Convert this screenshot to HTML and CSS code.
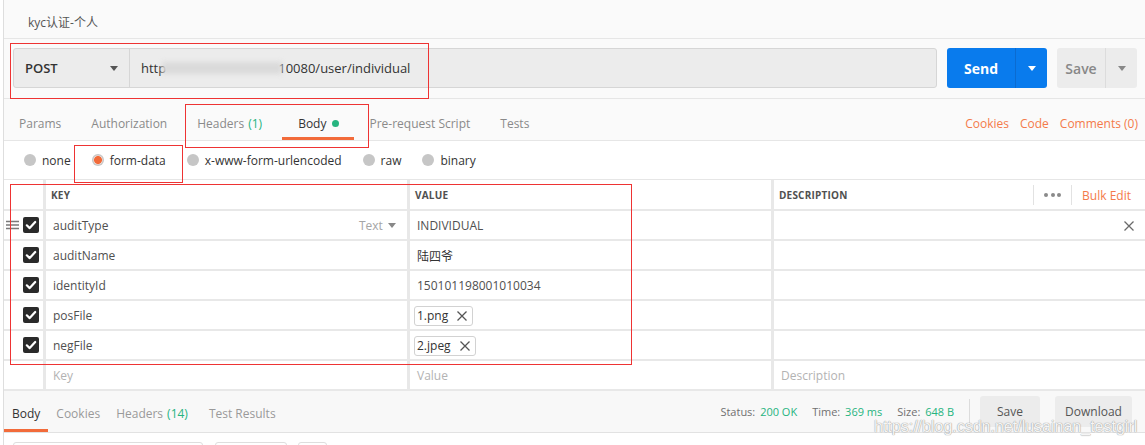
FILE: index.html
```html
<!DOCTYPE html>
<html lang="zh">
<head>
<meta charset="utf-8">
<title>kyc认证-个人</title>
<link rel="stylesheet" href="styles.css">
</head>
<body>
<div class="app">
  <div class="title">kyc认证-个人</div>

  <div class="urlbar">
    <div class="urlgroup">
      <div class="method"><span>POST</span><i class="caret dark"></i></div>
      <div class="url"><span>http</span><span class="blur"></span><span class="url-rest">10080/user/individual</span></div>
    </div>
    <div class="send">
      <span class="send-label">Send</span>
      <span class="send-caret"><i class="caret white"></i></span>
    </div>
    <div class="save">
      <span class="save-label">Save</span>
      <span class="save-caret"><i class="caret grey"></i></span>
    </div>
  </div>

  <div class="tabs">
    <div class="tab">Params</div>
    <div class="tab">Authorization</div>
    <div class="tab">Headers <span class="green">(1)</span></div>
    <div class="tab active">Body <i class="dot"></i></div>
    <div class="tab">Pre-request Script</div>
    <div class="tab">Tests</div>
    <div class="tab-links">
      <span>Cookies</span><span>Code</span><span>Comments (0)</span>
    </div>
  </div>

  <div class="bodytypes">
    <label class="bt"><i class="radio"></i>none</label>
    <label class="bt"><i class="radio on"></i>form-data</label>
    <label class="bt"><i class="radio"></i>x-www-form-urlencoded</label>
    <label class="bt"><i class="radio"></i>raw</label>
    <label class="bt"><i class="radio"></i>binary</label>
  </div>

  <div class="kv">
    <div class="cell head"></div>
    <div class="cell head">KEY</div>
    <div class="cell head">VALUE</div>
    <div class="cell head desc-head">
      <span>DESCRIPTION</span>
      <span class="head-tools">
        <i class="vdiv"></i>
        <span class="dots"><i></i><i></i><i></i></span>
        <i class="vdiv"></i>
        <span class="bulk">Bulk Edit</span>
      </span>
    </div>

    <div class="cell chk">
      <svg class="handle" width="13" height="10" viewBox="0 0 13 10"><path d="M0 1.5H13M0 5H13M0 8.5H13" stroke="#7a7a7a" stroke-width="1.4"/></svg>
      <svg class="box" width="16" height="16" viewBox="0 0 16 16"><rect x="0" y="0" width="16" height="16" rx="2" fill="#2a2a2a"/><path d="M3.8 8.3L6.7 11.1L12.2 5" fill="none" stroke="#fff" stroke-width="2.2" stroke-linecap="round" stroke-linejoin="round"/></svg>
    </div>
    <div class="cell key">auditType<span class="type">Text <i class="caret dark small"></i></span></div>
    <div class="cell val">INDIVIDUAL</div>
    <div class="cell desc"><svg class="del" width="10" height="10" viewBox="0 0 10 10"><path d="M0.5 0.5L9.5 9.5M9.5 0.5L0.5 9.5" stroke="#6a6a6a" stroke-width="1.3"/></svg></div>

    <div class="cell chk">
      <svg class="box" width="16" height="16" viewBox="0 0 16 16"><rect width="16" height="16" rx="2" fill="#2a2a2a"/><path d="M3.8 8.3L6.7 11.1L12.2 5" fill="none" stroke="#fff" stroke-width="2.2" stroke-linecap="round" stroke-linejoin="round"/></svg>
    </div>
    <div class="cell key">auditName</div>
    <div class="cell val cjk">陆四爷</div>
    <div class="cell desc"></div>

    <div class="cell chk">
      <svg class="box" width="16" height="16" viewBox="0 0 16 16"><rect width="16" height="16" rx="2" fill="#2a2a2a"/><path d="M3.8 8.3L6.7 11.1L12.2 5" fill="none" stroke="#fff" stroke-width="2.2" stroke-linecap="round" stroke-linejoin="round"/></svg>
    </div>
    <div class="cell key">identityId</div>
    <div class="cell val">150101198001010034</div>
    <div class="cell desc"></div>

    <div class="cell chk">
      <svg class="box" width="16" height="16" viewBox="0 0 16 16"><rect width="16" height="16" rx="2" fill="#2a2a2a"/><path d="M3.8 8.3L6.7 11.1L12.2 5" fill="none" stroke="#fff" stroke-width="2.2" stroke-linecap="round" stroke-linejoin="round"/></svg>
    </div>
    <div class="cell key">posFile</div>
    <div class="cell val files"><span class="chip">1.png<svg width="10" height="10" viewBox="0 0 10 10"><path d="M0.5 0.5L9.5 9.5M9.5 0.5L0.5 9.5" stroke="#555" stroke-width="1.3"/></svg></span></div>
    <div class="cell desc"></div>

    <div class="cell chk">
      <svg class="box" width="16" height="16" viewBox="0 0 16 16"><rect width="16" height="16" rx="2" fill="#2a2a2a"/><path d="M3.8 8.3L6.7 11.1L12.2 5" fill="none" stroke="#fff" stroke-width="2.2" stroke-linecap="round" stroke-linejoin="round"/></svg>
    </div>
    <div class="cell key">negFile</div>
    <div class="cell val files"><span class="chip">2.jpeg<svg width="10" height="10" viewBox="0 0 10 10"><path d="M0.5 0.5L9.5 9.5M9.5 0.5L0.5 9.5" stroke="#555" stroke-width="1.3"/></svg></span></div>
    <div class="cell desc"></div>

    <div class="cell chk"></div>
    <div class="cell key ph">Key</div>
    <div class="cell val ph">Value</div>
    <div class="cell desc ph">Description</div>
  </div>

  <div class="resbar">
    <div class="rtab active">Body</div>
    <div class="rtab">Cookies</div>
    <div class="rtab">Headers <span class="green">(14)</span></div>
    <div class="rtab">Test Results</div>
    <div class="res-right">
      <span class="stat">Status: <b>200 OK</b></span>
      <span class="stat">Time: <b>369 ms</b></span>
      <span class="stat">Size: <b>648 B</b></span>
      <i class="rdiv"></i>
      <span class="rbtn save-btn">Save</span>
      <span class="rbtn dl-btn">Download</span>
    </div>
  </div>

  <div class="resfields">
    <span class="rf rf1"></span>
    <span class="rf rf2"></span>
    <span class="rf rf3"></span>
  </div>
</div>

<div class="mark m1"></div>
<div class="mark m2"></div>
<div class="mark m3"></div>
<div class="mark m4"></div>

<div class="watermark">https://blog.csdn.net/lusainan_testgirl</div>
</body>
</html>
```

FILE: styles.css
```css
* { box-sizing: border-box; }

html, body {
  margin: 0;
  padding: 0;
}

body {
  position: relative;
  width: 1145px;
  height: 445px;
  overflow: hidden;
  background: #fff;
  font-family: "Open Sans", "Noto Sans CJK SC", sans-serif;
  font-size: 12px;
  color: #505050;
}

.app {
  margin-left: 3px;
  border-left: 1px solid #dedede;
  height: 445px;
}

/* title */
.title {
  height: 39px;
  background: #fafafa;
  border-bottom: 1px solid #e6e6e6;
  padding: 5px 0 0 24px;
  display: flex;
  align-items: center;
  font-size: 12px;
  color: #555;
}

/* url bar */
.urlbar {
  height: 60px;
  background: #fafafa;
  border-bottom: 1px solid #e6e6e6;
  display: flex;
  align-items: center;
  padding: 0 8px 1px 9px;
  gap: 10px;
}

.urlgroup {
  flex: 1;
  height: 40px;
  display: flex;
  background: #ececec;
  border: 1px solid #d6d6d6;
  border-radius: 3px;
}

.method {
  width: 116px;
  border-right: 1px solid #d6d6d6;
  display: flex;
  align-items: center;
  justify-content: space-between;
  padding: 0 11px 0 11px;
  font-size: 13px;
  font-weight: 600;
  color: #333;
}

.url {
  flex: 1;
  display: flex;
  align-items: center;
  padding-left: 11px;
  font-size: 13px;
  color: #333;
}

.blur {
  display: inline-block;
  width: 120px;
  height: 12px;
  margin: 0 -4px 0 -4px;
  background: #dadada;
  filter: blur(2.5px);
}

.caret {
  display: inline-block;
  width: 0;
  height: 0;
  border-left: 4.5px solid transparent;
  border-right: 4.5px solid transparent;
  border-top: 5px solid #555;
}
.caret.white { border-top-color: #fff; }
.caret.grey { border-top-color: #888; }
.caret.small {
  border-left-width: 4px;
  border-right-width: 4px;
  border-top-width: 5px;
  border-top-color: #888;
  margin-left: 2px;
  vertical-align: 2px;
}

.send {
  width: 100px;
  height: 40px;
  display: flex;
  background: #097bed;
  border-radius: 3px;
  color: #fff;
}
.send-label {
  width: 69px;
  display: flex;
  align-items: center;
  justify-content: center;
  font-size: 14px;
  font-weight: 700;
  border-right: 1px solid #0b6bd0;
}
.send-caret,
.save-caret {
  flex: 1;
  display: flex;
  align-items: center;
  justify-content: center;
}

.save {
  width: 80px;
  height: 40px;
  display: flex;
  background: #ececec;
  border-radius: 3px;
  color: #888;
}
.save-label {
  width: 49px;
  display: flex;
  align-items: center;
  justify-content: center;
  font-size: 14px;
  font-weight: 600;
  border-right: 1px solid #dcdcdc;
}

/* request tabs */
.tabs {
  height: 42px;
  background: #fafafa;
  border-bottom: 1px solid #e6e6e6;
  display: flex;
  align-items: stretch;
}
.tab {
  display: flex;
  align-items: center;
  padding: 10px 15px 0;
  border-bottom: 3px solid transparent;
  color: #8a8a8a;
  font-size: 12px;
  white-space: nowrap;
}
.tab.active {
  color: #333;
  border-bottom-color: #f26b3a;
  padding: 10px 15px 0 16px;
  margin-left: 5px;
}
.green { color: #26b47f; margin-left: 4px; }
.dot {
  display: inline-block;
  width: 7px;
  height: 7px;
  border-radius: 50%;
  background: #26b47f;
  margin-left: 6px;
}
.tab-links {
  margin-left: auto;
  display: flex;
  align-items: center;
  gap: 11px;
  padding: 10px 7px 3px 0;
  color: #f47a4a;
  font-size: 12px;
}

/* body types */
.bodytypes {
  height: 38px;
  background: #fff;
  display: flex;
  align-items: center;
  padding-left: 20px;
  gap: 21px;
}
.bt {
  display: flex;
  align-items: center;
  gap: 6px;
  font-size: 12px;
  color: #333;
}
.radio {
  display: inline-block;
  width: 12px;
  height: 12px;
  border-radius: 50%;
  background: #c6c6c6;
}
.radio.on {
  background: radial-gradient(circle, #f26b3a 0 3.6px, #f0d5cb 4.2px, #c6c6c6 5.2px);
}

/* key / value grid */
.kv {
  display: grid;
  grid-template-columns: 39px 361px 361px 1fr;
  grid-template-rows: 29px repeat(6, 28px);
  column-gap: 3px;
  row-gap: 2px;
  background: #e8e8e8;
  border-top: 1px solid #e6e6e6;
  padding-bottom: 2px;
}
.cell {
  background: #fff;
  display: flex;
  align-items: center;
  padding: 1px 7px 0;
  font-size: 12px;
  color: #505050;
  white-space: nowrap;
}
.cell.head {
  padding-left: 5px;
  font-size: 10px;
  font-weight: 700;
  color: #505050;
  letter-spacing: 0.2px;
}
.desc-head { justify-content: space-between; padding-right: 14px; }
.head-tools {
  display: flex;
  align-items: center;
  font-weight: 400;
}
.vdiv {
  display: inline-block;
  width: 1px;
  height: 20px;
  background: #e2e2e2;
}
.dots {
  display: inline-flex;
  gap: 2.5px;
  margin: 0 10px;
}
.dots i {
  display: inline-block;
  width: 4px;
  height: 4px;
  border-radius: 50%;
  background: #8a8a8a;
}
.bulk {
  margin-left: 10px;
  color: #f47a4a;
  font-size: 12px;
  letter-spacing: 0;
}

.cell.chk {
  padding: 0 4px 0 2px;
  justify-content: flex-end;
}
.handle { margin-right: 4px; }
.key .type {
  margin-left: auto;
  margin-right: 4px;
  color: #a5a5a5;
}
.desc .del { margin-left: auto; margin-right: 4px; }
.cjk { font-family: "Noto Sans CJK SC", "Open Sans", sans-serif; color: #333; }
.val.files { padding-left: 4px; }
.chip {
  display: inline-flex;
  align-items: center;
  gap: 9px;
  height: 20px;
  padding: 0 5px 0 2px;
  border: 1px solid #d2d2d2;
  border-radius: 3px;
  color: #333;
}
.ph { color: #b3b3b3; }

/* response bar */
.resbar {
  height: 42px;
  background: #f8f8f8;
  border-bottom: 1px solid #e2e2e2;
  display: flex;
  align-items: stretch;
}
.rtab {
  display: flex;
  align-items: center;
  padding: 7px 8px 0;
  border-bottom: 3px solid transparent;
  color: #9a9a9a;
  font-size: 12px;
  white-space: nowrap;
}
.rtab.active {
  color: #333;
  border-bottom-color: #f26b3a;
}
.rtab:nth-child(4) { margin-left: 5px; }
.res-right {
  margin-left: auto;
  display: flex;
  align-items: center;
  padding-right: 13px;
  font-size: 11px;
  color: #707070;
}
.stat { margin-right: 15px; white-space: nowrap; }
.stat b { color: #26b47f; font-weight: 400; margin-left: 2px; }
.rdiv {
  display: inline-block;
  width: 1px;
  height: 26px;
  background: #dcdcdc;
  margin: 0 10px 0 0;
}
.rbtn {
  height: 31px;
  display: inline-flex;
  align-items: center;
  justify-content: center;
  background: #ececec;
  border-radius: 3px;
  font-size: 12px;
  color: #555;
}
.save-btn { width: 60px; }
.dl-btn { width: 77px; margin-left: 15px; }

.resfields {
  display: flex;
  padding: 9px 0 0 9px;
  gap: 12px;
}
.rf {
  height: 20px;
  border: 1px solid #dedede;
  border-radius: 3px;
  background: #fff;
}
.rf1 { width: 190px; }
.rf2 { width: 72px; }
.rf3 { width: 29px; margin-left: -1px; }

/* red annotation boxes drawn over the screenshot */
.mark {
  position: absolute;
  border: 1px solid #ee3333;
  pointer-events: none;
}
.m1 { left: 10px; top: 43px; width: 419px; height: 56px; }
.m2 { left: 185px; top: 104px; width: 184px; height: 44px; }
.m3 { left: 74px; top: 145px; width: 109px; height: 38px; }
.m4 { left: 10px; top: 184px; width: 622px; height: 181px; }

.watermark {
  position: absolute;
  left: 874px;
  top: 418px;
  font-family: "Liberation Sans", Arial, sans-serif;
  font-size: 16px;
  color: rgba(255, 255, 255, 0.92);
  text-shadow: 0 0 1px #9a9a9a, 0 0 1px #9a9a9a;
  white-space: nowrap;
  pointer-events: none;
}
```
